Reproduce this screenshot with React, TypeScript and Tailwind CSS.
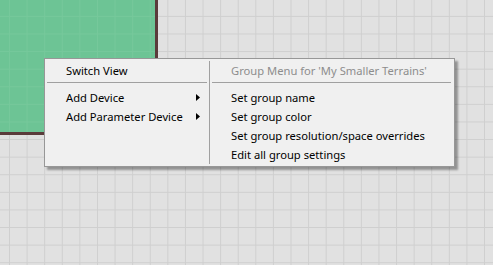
import React from "react";

function Arrow() {
  return (
    <svg width="4" height="7" viewBox="0 0 4 7" className="block">
      <path d="M0 0 L4 3.5 L0 7 Z" fill="#000" />
    </svg>
  );
}

function Item({ label, arrow }: { label: string; arrow?: boolean }) {
  return (
    <div className="flex h-[19px] items-center justify-between pl-[21px] pr-[9px]">
      <span>{label}</span>
      {arrow ? <Arrow /> : null}
    </div>
  );
}

export default function App() {
  return (
    <div
      className="relative h-[265px] w-[493px] overflow-hidden bg-[#e1e1e1] bg-[linear-gradient(to_right,#cfcfcf_1px,transparent_1px),linear-gradient(to_bottom,#cfcfcf_1px,transparent_1px)] bg-[size:17.6px_17.6px] bg-[position:9px_15.9px]"
      style={{ fontFamily: '"Noto Sans", sans-serif' }}
    >
      {/* group node */}
      <div className="absolute left-0 top-0 h-[135px] w-[158px] border-b-[3px] border-r-[3px] border-[#5b3b3b] bg-[#6dc495] bg-[linear-gradient(to_right,#76c89b_1px,transparent_1px),linear-gradient(to_bottom,#76c89b_1px,transparent_1px)] bg-[size:17.6px_17.6px] bg-[position:9px_15.9px]" />

      {/* context menu */}
      <div className="absolute left-[44px] top-[58px] flex h-[109px] w-[411px] border border-[#979797] bg-[#f0f0f0] text-[11.2px] leading-none text-black shadow-[3px_3px_2px_rgba(0,0,0,0.35)]">
        <div className="flex w-[164px] flex-col pt-[2px]">
          <Item label="Switch View" />
          <div className="mx-[2px] mb-[5px] mt-[2px] h-px bg-[#a0a0a0]" />
          <Item label="Add Device" arrow />
          <Item label="Add Parameter Device" arrow />
        </div>
        <div className="my-[2px] w-px bg-[#a0a0a0]" />
        <div className="flex flex-1 flex-col pt-[2px]">
          <div className="flex h-[19px] items-center pl-[21px] text-[#8d8d8d]">
            Group Menu for 'My Smaller Terrains'
          </div>
          <div className="ml-[2px] mr-[3px] mb-[5px] mt-[2px] h-px bg-[#a0a0a0]" />
          <Item label="Set group name" />
          <Item label="Set group color" />
          <Item label="Set group resolution/space overrides" />
          <Item label="Edit all group settings" />
        </div>
      </div>
    </div>
  );
}
